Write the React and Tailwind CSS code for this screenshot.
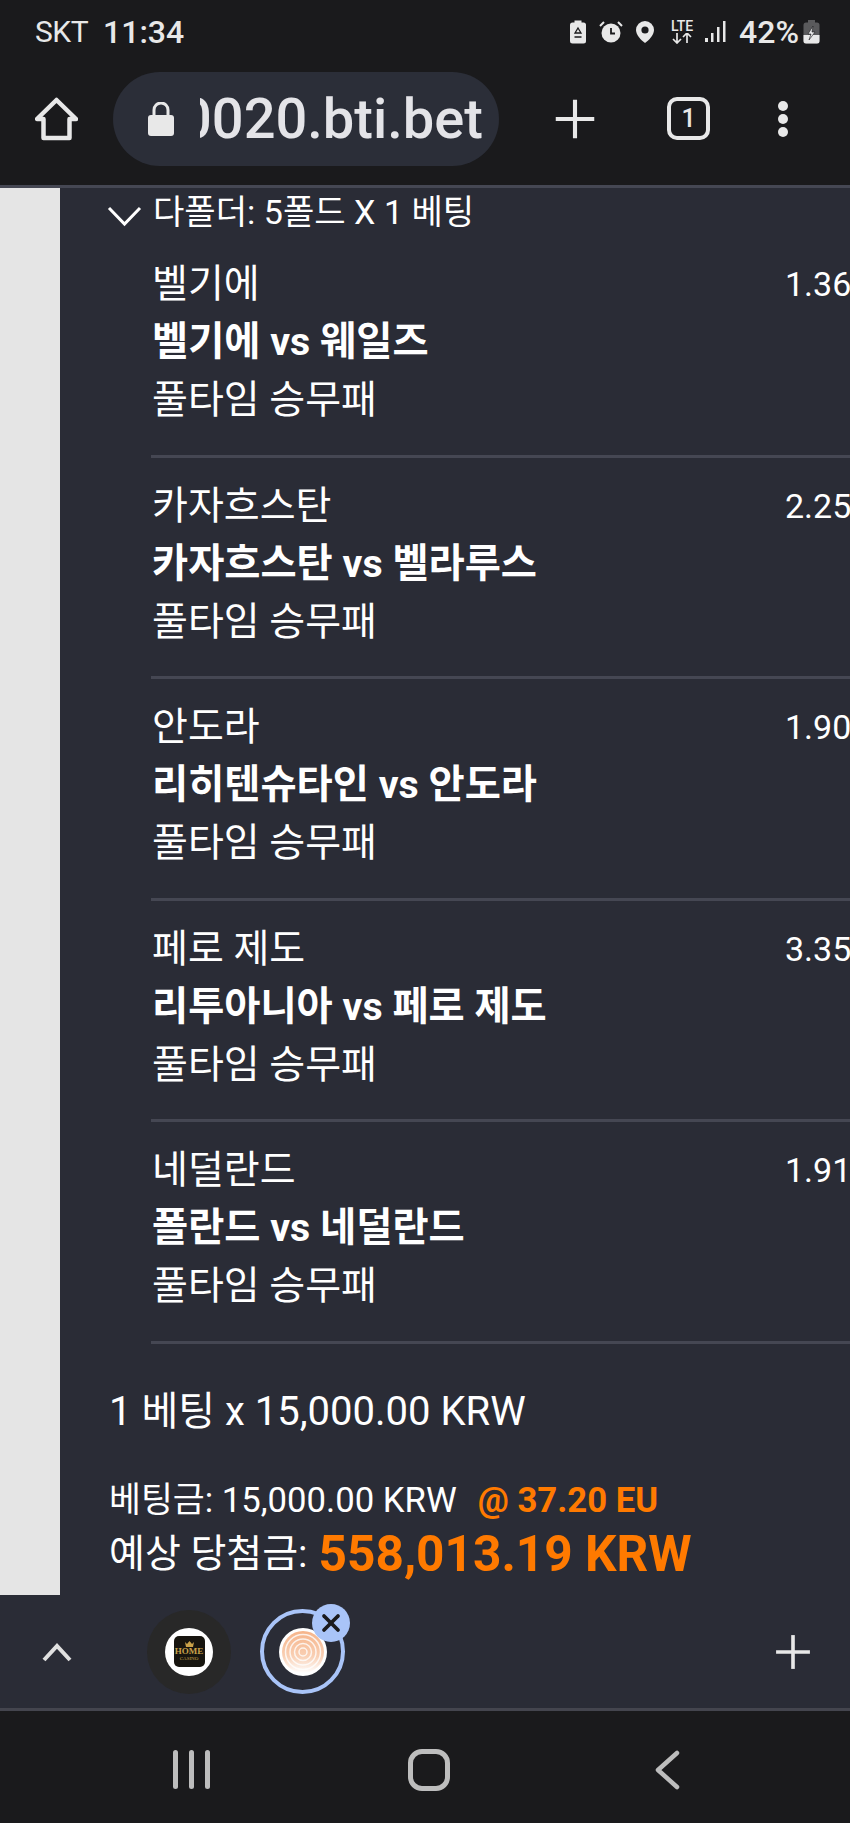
import React from "react";
import { Plus, X } from "lucide-react";

const legs = [
  { pick: "벨기에", match: "벨기에 vs 웨일즈", odds: "1.36" },
  { pick: "카자흐스탄", match: "카자흐스탄 vs 벨라루스", odds: "2.25" },
  { pick: "안도라", match: "리히텐슈타인 vs 안도라", odds: "1.90" },
  { pick: "페로 제도", match: "리투아니아 vs 페로 제도", odds: "3.35" },
  { pick: "네덜란드", match: "폴란드 vs 네덜란드", odds: "1.91" },
];

const StatusIcons = () => (
  <div className="flex items-center">
    <svg width="18" height="24" viewBox="0 0 17 24" fill="#e8e8e8">
      <rect x="0.5" y="2.500" width="16" height="21" rx="2.500" />
      <rect x="5" y="0.500" width="7" height="3" />
      <path d="M8.500 8l3 5H5.500zM5 17h7" stroke="#1a1a1c" strokeWidth="1.300" fill="none" />
    </svg>
    <svg className="ml-[12px]" width="24" height="24" viewBox="0 0 24 24" fill="#e8e8e8">
      <circle cx="12" cy="13" r="9.500" />
      <path d="M12 8v5.500h4" stroke="#1a1a1c" strokeWidth="1.800" fill="none" />
      <path d="M1 6l4-4M23 6l-4-4" stroke="#e8e8e8" strokeWidth="2" />
    </svg>
    <svg className="ml-[12px]" width="20" height="24" viewBox="0 0 20 24" fill="#e8e8e8">
      <path d="M10 1a9 9 0 0 0-9 9c0 5 5 10 9 13 4-3 9-8 9-13a9 9 0 0 0-9-9z" />
      <circle cx="10" cy="10" r="3.600" fill="#1a1a1c" />
    </svg>
    <div className="ml-[14px] flex w-[26px] flex-col items-center text-[#e8e8e8]">
      <span className="text-[14px] leading-[13px] font-medium">LTE</span>
      <svg width="22" height="11" viewBox="0 0 22 11" fill="none" stroke="#e8e8e8" strokeWidth="1.700">
        <path d="M6 0v10M2 6l4 4 4-4M16 10V0M12 4l4-4 4 4" />
      </svg>
    </div>
    <svg className="ml-[10px]" width="22" height="22" viewBox="0 0 22 22" fill="#e8e8e8">
      <rect x="0" y="17" width="3" height="4" />
      <rect x="6" y="12" width="2.500" height="9" />
      <rect x="12" y="6" width="2.500" height="15" />
      <rect x="18" y="0" width="2.500" height="21" />
    </svg>
    <span className="ml-[12px] text-[32px] leading-none font-medium text-[#e8e8e8]">42%</span>
    <svg className="ml-[4px]" width="17" height="24" viewBox="0 0 17 24">
      <rect x="0.500" y="2.500" width="16" height="21" rx="2.500" fill="#5a5a5c" />
      <rect x="5" y="0" width="7" height="3" fill="#5a5a5c" />
      <path d="M0.500 15h16v6a2.500 2.500 0 0 1-2.500 2.500H3A2.500 2.500 0 0 1 .5 21z" fill="#e8e8e8" />
      <path d="M10 6l-5 8h3l-2 6 6-8H9z" fill="#e8e8e8" stroke="#1a1a1c" strokeWidth="0.600" />
    </svg>
  </div>
);

const Toolbar = () => (
  <div className="flex h-[185px] flex-col bg-[#1a1a1c] text-[#e8e8e8]">
    <div className="flex h-[62px] items-center justify-between pt-[2px] pr-[30px] pl-[35px]">
      <div className="flex items-center gap-[15px] leading-none">
        <span className="text-[30px] tracking-[-0.5px]">SKT</span>
        <span className="text-[32px] font-medium">11:34</span>
      </div>
      <StatusIcons />
    </div>
    <div className="flex h-[113px] items-center">
      <svg className="ml-[35px]" width="43" height="44" viewBox="0 0 43 44" fill="none" stroke="#e8e8e8" strokeWidth="4.500" strokeLinejoin="round">
        <path d="M21.500 3L2 22h6.500v19h26V22H41z" />
      </svg>
      <div className="ml-[35px] flex h-[94px] w-[386px] items-center rounded-full bg-[#2b2e38] pl-[35px]">
        <svg width="26" height="34" viewBox="0 0 26 34" fill="#e8e8e8">
          <rect x="0" y="13" width="26" height="21" rx="3" />
          <path d="M6 14V8a7 7 0 0 1 14 0v6" fill="none" stroke="#e8e8e8" strokeWidth="3" />
        </svg>
        <div className="ml-[26px] w-[284px] overflow-hidden">
          <span className="-ml-[20px] block text-[56px] leading-none font-medium whitespace-nowrap text-[#e4e4e8]">0020.bti.bet</span>
        </div>
      </div>
      <Plus className="ml-[43px]" size={66} strokeWidth={1.500} strokeLinecap="butt" />
      <div className="ml-[59px] flex h-[43px] w-[43px] items-center justify-center rounded-[10px] border-[4px] border-[#e8e8e8] text-[25px] leading-none font-medium">1</div>
      <div className="ml-[68px] flex flex-col gap-[3px]">
        <span className="h-[10px] w-[10px] rounded-full bg-[#e8e8e8]" />
        <span className="h-[10px] w-[10px] rounded-full bg-[#e8e8e8]" />
        <span className="h-[10px] w-[10px] rounded-full bg-[#e8e8e8]" />
      </div>
    </div>
  </div>
);

const Leg = ({ pick, match, odds }) => (
  <div className="ml-[91px] h-[221.500px] border-b-[3px] border-[#454753] pt-[19px] pl-[1px]">
    <div className="flex items-start justify-between">
      <span className="text-[39px] leading-[58px]">{pick}</span>
      <span className="w-[65px] text-[34px] leading-[58px] whitespace-nowrap">{odds}</span>
    </div>
    <div className="text-[39.300px] leading-[58px] font-bold">{match}</div>
    <div className="text-[39px] leading-[58px]">풀타임 승무패</div>
  </div>
);

const Slip = () => (
  <div className="flex h-[1410px] overflow-hidden border-t-[3px] border-[#454753]">
    <div className="w-[60px] shrink-0 bg-[#e5e5e5]" />
    <div className="flex-1 overflow-hidden bg-[#2a2c36] text-white">
      <div className="flex h-[48px] items-center pl-[47px]">
        <svg className="mt-[8px]" width="35" height="21" viewBox="0 0 35 21" fill="none" stroke="#fff" strokeWidth="3">
          <path d="M2 2l15.500 16L33 2" />
        </svg>
        <span className="ml-[11px] text-[34.100px] leading-none">다폴더: 5폴드 X 1 베팅</span>
      </div>
      {legs.map((leg) => (
        <Leg key={leg.pick} {...leg} />
      ))}
      <div className="mt-[46px] ml-[49px] text-[40px] leading-[44px]">1 베팅 x 15,000.00 KRW</div>
      <div className="mt-[47px] ml-[49px] flex items-center text-[34.700px] leading-[38px]">
        <span>베팅금: 15,000.00 KRW</span>
        <span className="ml-[21px] font-bold text-[#ff7a00]">@ 37.20 EU</span>
      </div>
      <div className="mt-[6px] ml-[49px] flex items-center text-[39px] leading-[58px]">
        <span>예상 당첨금:</span>
        <span className="ml-[11px] text-[49.600px] font-bold text-[#ff7a00]">558,013.19 KRW</span>
      </div>
    </div>
  </div>
);

const Rings = () => (
  <svg width="44" height="44" viewBox="0 0 44 44" fill="none">
    <defs>
      <linearGradient id="ringFade" x1="0" y1="0" x2="0" y2="1">
        <stop offset="0" stopColor="#f6b48a" />
        <stop offset="0.6" stopColor="#f9cfb3" />
        <stop offset="1" stopColor="#fff" />
      </linearGradient>
    </defs>
    <circle cx="22" cy="22" r="21" fill="url(#ringFade)" />
    <g stroke="#fff" strokeWidth="1.500" opacity="0.8">
      <circle cx="22" cy="22" r="4" />
      <circle cx="22" cy="22" r="8.500" />
      <circle cx="22" cy="22" r="13" />
      <circle cx="22" cy="22" r="17.500" />
    </g>
  </svg>
);

const TabBar = () => (
  <div className="flex h-[116px] items-center border-b-[3px] border-[#44454e] bg-[#2a2c36] text-[#e8e8e8]">
    <svg className="ml-[42px]" width="30" height="20" viewBox="0 0 30 20" fill="none" stroke="#e0e0e0" strokeWidth="4">
      <path d="M2 18L15 4l13 14" />
    </svg>
    <div className="ml-[75px] flex h-[84px] w-[84px] items-center justify-center rounded-full bg-[#282828]">
      <div className="flex h-[48px] w-[48px] items-center justify-center rounded-full bg-white">
        <div className="flex h-[31px] w-[31px] flex-col items-center justify-center rounded-[5px] bg-[#17150f] font-['Liberation_Serif',serif] text-[#c9a24a]">
          <svg width="9" height="6" viewBox="0 0 9 6" fill="#c9a24a">
            <path d="M0 1l2 2 2.500-3L7 3l2-2-1 5H1z" />
          </svg>
          <span className="text-[9px] leading-[9px] font-bold">HOME</span>
          <span className="text-[5px] leading-[6px]">CASINO</span>
        </div>
      </div>
    </div>
    <div className="relative ml-[29px] flex h-[85px] w-[85px] items-center justify-center rounded-full border-[4px] border-[#a9c4f8]">
      <div className="flex h-[48px] w-[48px] items-center justify-center rounded-full bg-white">
        <Rings />
      </div>
      <div className="absolute -top-[9px] -right-[9px] flex h-[38px] w-[38px] items-center justify-center rounded-full bg-[#a9c4f8]">
        <X size={28} strokeWidth={3.200} color="#1a1a1c" />
      </div>
    </div>
    <Plus className="mr-[28px] ml-auto" size={58} strokeWidth={1.500} strokeLinecap="butt" />
  </div>
);

const NavBar = () => (
  <div className="flex h-[112px] items-center bg-[#1a1a1c] pt-[5px]">
    <div className="ml-[173px] flex gap-[11px]">
      <span className="h-[39px] w-[5px] rounded-full bg-[#bdbdbd]" />
      <span className="h-[39px] w-[5px] rounded-full bg-[#bdbdbd]" />
      <span className="h-[39px] w-[5px] rounded-full bg-[#bdbdbd]" />
    </div>
    <div className="ml-[198px] h-[42px] w-[42px] rounded-[14px] border-[5px] border-[#bdbdbd]" />
    <svg className="ml-[205px]" width="25" height="40" viewBox="0 0 25 40" fill="none" stroke="#bdbdbd" strokeWidth="4.500" strokeLinecap="round" strokeLinejoin="round">
      <path d="M22 3L3 20l19 17" />
    </svg>
  </div>
);

export default function App() {
  return (
    <div className="h-[1823px] w-[850px] overflow-hidden bg-[#1a1a1c] font-['Roboto','Noto_Sans_CJK_KR',sans-serif]">
      <Toolbar />
      <Slip />
      <TabBar />
      <NavBar />
    </div>
  );
}
